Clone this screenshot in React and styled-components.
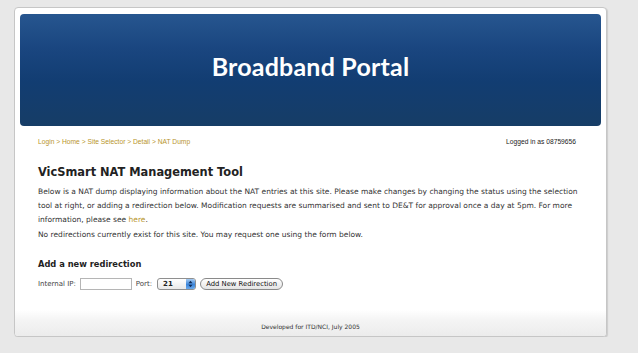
import React from "react";
import styled, { createGlobalStyle } from "styled-components";

const GlobalStyle = createGlobalStyle`
  html, body {
    margin: 0;
    padding: 0;
    background: #e8e8e8;
  }
  body {
    font-family: "DejaVu Sans", Verdana, sans-serif;
    color: #222;
  }
`;

const Page = styled.div`
  padding: 7px 0 0 14px;
`;

const Card = styled.div`
  width: 581px;
  background: #fff;
  border: 1px solid #c6c6c6;
  border-radius: 4px;
  box-shadow: 1px 1px 1px rgba(0, 0, 0, 0.12);
  padding: 6px 5px 0 5px;
  overflow: hidden;
`;

const Banner = styled.header`
  height: 112px;
  box-sizing: border-box;
  padding-bottom: 9px;
  border-radius: 4px;
  background: linear-gradient(180deg, #27568f 0%, #1a4680 30%, #123d72 60%, #163d66 100%);
  display: flex;
  align-items: center;
  justify-content: center;
`;

const BannerTitle = styled.h1`
  margin: 0;
  font-family: Lato, "Open Sans", sans-serif;
  font-weight: 700;
  font-size: 25px;
  color: #fff;
  letter-spacing: 0.2px;
`;

const Crumbs = styled.div`
  display: flex;
  justify-content: space-between;
  align-items: center;
  padding: 10px 25px 0 18px;
  height: 10px;
  font-family: "Liberation Sans", Arial, sans-serif;
  font-size: 6.7px;
`;

const CrumbTrail = styled.div`
  color: #b8952c;
`;

const LoggedIn = styled.div`
  color: #222;
`;

const Body = styled.main`
  box-sizing: border-box;
  padding: 19px 18px 0 18px;
  height: 164px;
`;

const Heading = styled.h2`
  margin: ${(p) => p.$top || 0}px 0 0 0;
  font-size: ${(p) => p.$size || 11.4}px;
  font-weight: 700;
  color: #222;
  line-height: 14px;
`;

const Para = styled.p`
  margin: ${(p) => p.$top ?? 4}px 0 0 0;
  font-size: 7.5px;
  line-height: 14px;
  color: #333;
  white-space: nowrap;
`;

const Link = styled.a`
  color: #b8952c;
  text-decoration: none;
`;

const FormRow = styled.div`
  display: flex;
  align-items: center;
  margin-top: 6px;
  font-size: 7px;
  color: #444;
  height: 14px;
`;

const Label = styled.span`
  margin-right: 4px;
`;

const TextInput = styled.input`
  width: 50px;
  height: 10px;
  border: 1px solid #b5b5b5;
  padding: 0;
  margin: 0 4px 0 0;
  background: #fff;
`;

const SelectBox = styled.div`
  position: relative;
  width: 32px;
  height: 10px;
  border: 1px solid #8f8f8f;
  border-radius: 3px;
  margin: 0 4px 0 1px;
  display: flex;
  align-items: center;
  font-size: 7px;
  font-weight: 700;
  color: #222;
  padding-left: 5px;
  background: linear-gradient(180deg, #fff, #e9e9e9);
  overflow: hidden;
`;

const Stepper = styled.span`
  position: absolute;
  right: 0;
  top: 0;
  bottom: 0;
  width: 9px;
  background: linear-gradient(180deg, #a6cbf2, #3d86db 55%, #6aa8ea);
  display: flex;
  align-items: center;
  justify-content: center;
`;

const Button = styled.button`
  height: 12px;
  width: 83px;
  padding: 0;
  border: 1px solid #8a8a8a;
  border-radius: 7px;
  background: linear-gradient(180deg, #ffffff, #e4e4e4);
  font-family: "DejaVu Sans", Verdana, sans-serif;
  font-size: 6.8px;
  font-weight: 400;
  color: #111;
  line-height: 10px;
  cursor: pointer;
`;

const Footer = styled.footer`
  height: 26px;
  margin: 0 -5px;
  background: linear-gradient(180deg, #fff 0%, #f4f4f4 40%, #ececec 100%);
  display: flex;
  align-items: flex-end;
  justify-content: center;
`;

const FooterText = styled.span`
  font-size: 6px;
  color: #333;
  margin-bottom: 6px;
`;

export default function App() {
  return (
    <>
      <GlobalStyle />
      <Page>
        <Card>
          <Banner>
            <BannerTitle>Broadband Portal</BannerTitle>
          </Banner>
          <Crumbs>
            <CrumbTrail>
              Login &gt; Home &gt; Site Selector &gt; Detail &gt; NAT Dump
            </CrumbTrail>
            <LoggedIn>Logged in as 08759656</LoggedIn>
          </Crumbs>
          <Body>
            <Heading>VicSmart NAT Management Tool</Heading>
            <Para $top={6}>
              Below is a NAT dump displaying information about the NAT entries at this site. Please make changes by changing the status using the selection
              <br />
              tool at right, or adding a redirection below. Modification requests are summarised and sent to DE&amp;T for approval once a day at 5pm. For more
              <br />
              information, please see <Link href="#">here</Link>.
            </Para>
            <Para $top={1}>
              No redirections currently exist for this site. You may request one using the form below.
            </Para>
            <Heading $size={8.3} $top={15}>Add a new redirection</Heading>
            <FormRow>
              <Label>Internal IP:</Label>
              <TextInput />
              <Label>Port:</Label>
              <SelectBox>
                21
                <Stepper>
                  <svg width="5" height="8" viewBox="0 0 5 8">
                    <path d="M0.5 3.2 L2.5 0.8 L4.5 3.2 Z" fill="#102a55" />
                    <path d="M0.5 4.8 L2.5 7.2 L4.5 4.8 Z" fill="#102a55" />
                  </svg>
                </Stepper>
              </SelectBox>
              <Button>Add New Redirection</Button>
            </FormRow>
          </Body>
          <Footer>
            <FooterText>Developed for ITD/NCI, July 2005</FooterText>
          </Footer>
        </Card>
      </Page>
    </>
  );
}
